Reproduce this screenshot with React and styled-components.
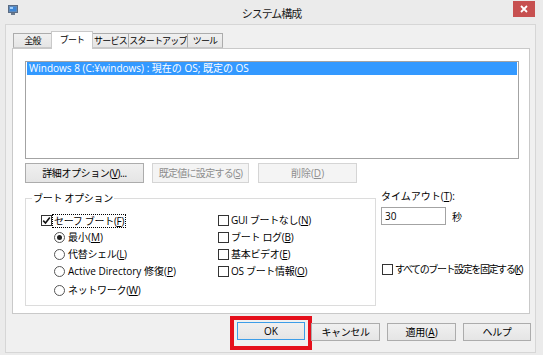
import React from 'react';
import styled, { createGlobalStyle } from 'styled-components';

const FONT = `"Open Sans", "Noto Sans CJK JP", sans-serif`;
const CJK = `"Noto Sans CJK JP", sans-serif`;

const GlobalStyle = createGlobalStyle`
  html, body { margin: 0; padding: 0; background: #ebebeb; }
  body {
    font-family: ${FONT};
    font-size: 10px;
    color: #000;
  }
  * { box-sizing: border-box; }
`;

const Window = styled.div`
  width: 543px;
  height: 355px;
  background: #ebebeb;
  display: flex;
  flex-direction: column;
  overflow: hidden;
`;

const TitleBar = styled.div`
  flex: none;
  height: 24px;
  display: grid;
  grid-template-columns: 1fr auto 1fr;
  align-items: start;
`;

const AppIcon = styled.svg`
  margin: 5px 0 0 8px;
  display: block;
`;

const Title = styled.div`
  font-family: ${CJK};
  font-size: 11px;
  letter-spacing: -1px;
  line-height: 16px;
  margin-top: 5px;
  color: #1b1b1b;
  white-space: nowrap;
`;

const CloseButton = styled.div`
  justify-self: end;
  width: 22px;
  height: 16px;
  margin: 1px 8px 0 0;
  background: #c75050;
  display: flex;
  align-items: center;
  justify-content: center;
`;

const Client = styled.div`
  flex: 1;
  margin: 0 7px 2px 5px;
  border: 1px solid #d6d6d6;
  background: #f0f0f0;
  display: flex;
  flex-direction: column;
  padding: 6px 5px 0 6px;
`;

const TabStrip = styled.div`
  display: flex;
  align-items: flex-end;
  height: 17px;
  padding-left: 1px;
`;

const Tab = styled.div`
  position: relative;
  width: ${(p) => p.$w}px;
  margin-left: ${(p) => (p.$first ? 0 : -1)}px;
  height: ${(p) => (p.$active ? 18 : 15)}px;
  margin-bottom: ${(p) => (p.$active ? -1 : 0)}px;
  z-index: ${(p) => (p.$active ? 2 : 1)};
  border: 1px solid ${(p) => (p.$active ? '#c9c9c9' : '#acacac')};
  border-bottom: ${(p) => (p.$active ? 'none' : '1px solid #c9c9c9')};
  background: ${(p) => (p.$active ? '#ffffff' : 'linear-gradient(#f0f0f0, #e5e5e5)')};
  display: flex;
  align-items: center;
  justify-content: center;
  font-family: ${CJK};
  font-size: 9px;
  letter-spacing: -0.8px;
  line-height: 13px;
  white-space: nowrap;
  padding-bottom: ${(p) => (p.$active ? 2 : 0)}px;
`;

const Panel = styled.div`
  height: 266px;
  background: #ffffff;
  border: 1px solid #c9c9c9;
  display: flex;
  flex-direction: column;
  padding: 12px 10px 0 12px;
`;

const ListBox = styled.div`
  height: 98px;
  border: 1px solid #a3a3a3;
  background: #fff;
  padding: 0 1px;
`;

const ListItem = styled.div`
  height: 13px;
  line-height: 13px;
  padding-left: 2px;
  background: ${(p) => (p.$selected ? '#3399ff' : 'transparent')};
  color: ${(p) => (p.$selected ? '#fff' : '#000')};
  white-space: nowrap;
`;

const ButtonRow = styled.div`
  display: flex;
  margin-top: 4px;
`;

const Btn = styled.button`
  flex: none;
  width: ${(p) => p.$w}px;
  height: ${(p) => p.$h}px;
  margin-left: ${(p) => p.$ml || 0}px;
  padding: 0;
  font: inherit;
  letter-spacing: ${(p) => p.$ls || 0}px;
  line-height: 13px;
  color: #000;
  border: 1px solid ${(p) => (p.$default ? '#3c9de8' : '#acacac')};
  background: linear-gradient(#f0f0f0, #e5e5e5);
  white-space: nowrap;
  &:disabled {
    color: #8d8d8d;
    border-color: #d5d5d5;
    background: #f4f4f4;
  }
`;

const Lower = styled.div`
  display: flex;
  align-items: flex-start;
`;

const GroupBox = styled.div`
  position: relative;
  flex: none;
  width: 351px;
  height: 108px;
  margin-top: 15px;
  border: 1px solid #dcdcdc;
  padding: 13px 0 0 15px;
  display: grid;
  grid-template-columns: 177px auto;
`;

const Legend = styled.div`
  position: absolute;
  top: -7px;
  left: 6px;
  padding: 0 1px;
  background: #fff;
  line-height: 13px;
  letter-spacing: -0.3px;
  white-space: nowrap;
`;

const Column = styled.div`
  display: flex;
  flex-direction: column;
`;

const OptionRow = styled.div`
  display: flex;
  align-items: center;
  height: 17px;
  padding-left: ${(p) => p.$indent || 0}px;
  margin-top: ${(p) => p.$mt || 0}px;
  white-space: nowrap;
  line-height: 13px;
  letter-spacing: ${(p) => p.$ls || 0}px;
`;

const Box = styled.span`
  flex: none;
  width: 11px;
  height: 11px;
  border: 1px solid #333;
  background: #fff;
  display: inline-flex;
  align-items: center;
  justify-content: center;
  margin-right: ${(p) => p.$gap || 2}px;
`;

const Radio = styled.span`
  flex: none;
  width: 11px;
  height: 11px;
  border: 1px solid #555;
  border-radius: 50%;
  background: #fff;
  display: inline-flex;
  align-items: center;
  justify-content: center;
  margin-right: 3px;
  &::after {
    content: '';
    width: 5px;
    height: 5px;
    border-radius: 50%;
    background: ${(p) => (p.$on ? '#222' : 'transparent')};
  }
`;

const Focus = styled.span`
  outline: 1px dotted #000;
  outline-offset: 0;
  padding: 0 1px;
  line-height: 12px;
`;

const SideColumn = styled.div`
  display: flex;
  flex-direction: column;
  margin-left: 5px;
  padding-top: 7px;
`;

const Label = styled.div`
  line-height: 13px;
  white-space: nowrap;
`;

const InputRow = styled.div`
  display: flex;
  align-items: center;
  margin-top: 4px;
`;

const TextInput = styled.div`
  width: 65px;
  height: 18px;
  border: 1px solid #a3a3a3;
  background: #fff;
  padding-left: 3px;
  line-height: 16px;
`;

const Unit = styled.span`
  margin-left: 6px;
`;

const SideCheck = styled(OptionRow)`
  height: 13px;
  margin-top: 38px;
  padding-left: 1px;
`;

const ButtonBar = styled.div`
  display: flex;
  justify-content: flex-end;
  gap: 7px;
  margin-top: 9px;
  margin-right: -1px;
`;

const Highlight = styled.div`
  display: flex;
  margin: -7px -8px -9px -8px;
  padding: 2px 3px 4px 3px;
  border: 4px solid #e5101c;
`;

const Check = () => (
  <svg width="9" height="9" viewBox="0 0 9 9">
    <path d="M1.2 4.6 L3.5 7 L7.8 1.6" fill="none" stroke="#111" strokeWidth="1.6" />
  </svg>
);

const Key = ({ k }) => <u>{k}</u>;

export default function App() {
  return (
    <>
      <GlobalStyle />
      <Window>
        <TitleBar>
          <AppIcon width="10" height="10" viewBox="0 0 10 10">
            <rect x="0.5" y="0.5" width="9" height="7" fill="#7c8fa6" stroke="#5a6c84" />
            <rect x="1.5" y="1.5" width="7" height="5" fill="#3d86d6" />
            <rect x="2" y="2" width="3" height="2" fill="#9fd0ff" />
            <rect x="3" y="8" width="4" height="2" fill="#6d7c8e" />
          </AppIcon>
          <Title>システム構成</Title>
          <CloseButton>
            <svg width="8" height="8" viewBox="0 0 8 8">
              <path d="M1 1 L7 7 M7 1 L1 7" stroke="#fff" strokeWidth="1.8" />
            </svg>
          </CloseButton>
        </TitleBar>
        <Client>
          <TabStrip>
            <Tab $w={39} $first>全般</Tab>
            <Tab $w={42} $active>ブート</Tab>
            <Tab $w={37}>サービス</Tab>
            <Tab $w={60}>スタートアップ</Tab>
            <Tab $w={36}>ツール</Tab>
          </TabStrip>
          <Panel>
            <ListBox>
              <ListItem $selected>Windows 8 (C:¥windows) : 現在の OS; 既定の OS</ListItem>
            </ListBox>
            <ButtonRow>
              <Btn $w={119} $h={20} $ls={-0.4}>詳細オプション(<Key k="V" />)...</Btn>
              <Btn $w={97} $h={20} $ml={8} $ls={-0.7} disabled>既定値に設定する(<Key k="S" />)</Btn>
              <Btn $w={99} $h={20} $ml={9} disabled>削除(<Key k="D" />)</Btn>
            </ButtonRow>
            <Lower>
              <GroupBox>
                <Legend>ブート オプション</Legend>
                <Column>
                  <OptionRow $ls={-0.3}>
                    <Box $gap={1}><Check /></Box>
                    <Focus>セーフ ブート(<Key k="F" />)</Focus>
                  </OptionRow>
                  <OptionRow $indent={13}><Radio $on />最小(<Key k="M" />)</OptionRow>
                  <OptionRow $indent={13} $ls={-0.3}><Radio />代替シェル(<Key k="L" />)</OptionRow>
                  <OptionRow $indent={13}><Radio />Active Directory 修復(<Key k="P" />)</OptionRow>
                  <OptionRow $indent={13} $mt={2} $ls={-0.3}><Radio />ネットワーク(<Key k="W" />)</OptionRow>
                </Column>
                <Column>
                  <OptionRow $ls={-0.3}><Box />GUI ブートなし(<Key k="N" />)</OptionRow>
                  <OptionRow $ls={-0.3}><Box />ブート ログ(<Key k="B" />)</OptionRow>
                  <OptionRow $ls={-0.3}><Box />基本ビデオ(<Key k="E" />)</OptionRow>
                  <OptionRow $ls={-0.3}><Box />OS ブート情報(<Key k="O" />)</OptionRow>
                </Column>
              </GroupBox>
              <SideColumn>
                <Label>タイムアウト(<Key k="T" />):</Label>
                <InputRow>
                  <TextInput>30</TextInput>
                  <Unit>秒</Unit>
                </InputRow>
                <SideCheck $ls={-1.4}><Box />すべてのブート設定を固定する(<Key k="K" />)</SideCheck>
              </SideColumn>
            </Lower>
          </Panel>
          <ButtonBar>
            <Highlight>
              <Btn $w={68} $h={18} $default>OK</Btn>
            </Highlight>
            <Btn $w={69} $h={18} $ls={-0.4}>キャンセル</Btn>
            <Btn $w={69} $h={18}>適用(<Key k="A" />)</Btn>
            <Btn $w={68} $h={18} $ls={-0.4}>ヘルプ</Btn>
          </ButtonBar>
        </Client>
      </Window>
    </>
  );
}
